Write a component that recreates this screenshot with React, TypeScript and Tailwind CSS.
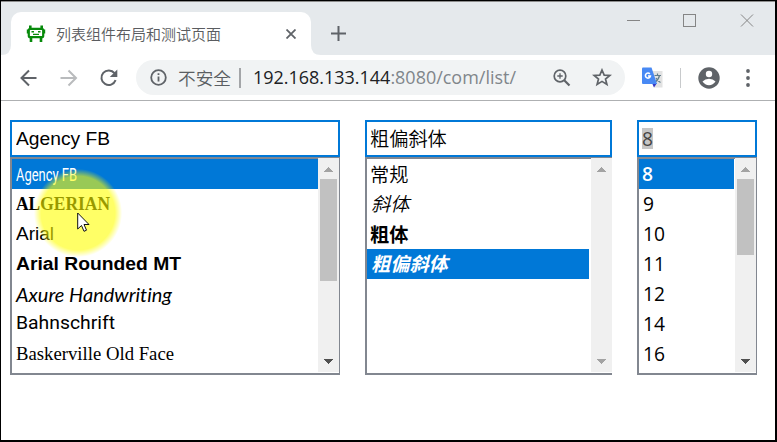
import React, { useLayoutEffect, useRef, useState } from 'react';

type FitProps = { width: number; className?: string; children: React.ReactNode };

// Text stretched horizontally so that its advance equals the given width.
function FitText({ width, className = '', children }: FitProps) {
  const ref = useRef<HTMLSpanElement>(null);
  const [scale, setScale] = useState(1);
  useLayoutEffect(() => {
    const natural = ref.current?.getBoundingClientRect().width;
    if (natural) setScale(width / natural);
  }, [width]);
  return (
    <span ref={ref} className={`inline-block origin-left whitespace-pre ${className}`} style={{ transform: `scaleX(${scale})` }}>
      {children}
    </span>
  );
}

function Arrow({ up = false, dim = false }: { up?: boolean; dim?: boolean }) {
  return (
    <svg width="9" height="5" viewBox="0 0 9 5" shapeRendering="crispEdges" className={dim ? 'fill-[#a3a3a3]' : 'fill-[#505050]'}>
      <path d={up ? 'M0 5L4.5 0L9 5Z' : 'M0 0H9L4.5 5Z'} />
    </svg>
  );
}

type ScrollProps = { thumb?: string; disabled?: boolean };

function Scrollbar({ thumb, disabled = false }: ScrollProps) {
  return (
    <div className="-mt-px flex h-[214px] w-[21px] shrink-0 flex-col items-center bg-[#f0f0f0]">
      <div className="flex h-[21px] shrink-0 items-center pt-[2px]"><Arrow up dim /></div>
      <div className="min-h-0 flex-1">{thumb && <div className={`w-[17px] bg-[#c1c1c1] ${thumb}`} />}</div>
      <div className="flex h-[21px] shrink-0 items-center"><Arrow dim={disabled} /></div>
    </div>
  );
}

type Item = { text: string; width: number; font: string };

type ListProps = {
  size: string;
  value: React.ReactNode;
  items: Item[];
  selected: number;
  rows: string;
  scroll: React.ReactNode;
  border?: string;
};

function ListField({ size, value, items, selected, rows, scroll, border = 'border-r' }: ListProps) {
  return (
    <div className={`flex shrink-0 flex-col ${size}`}>
      <div className="flex h-[37px] items-center border-2 border-[#0078d7] bg-white pl-1">{value}</div>
      <div className={`flex h-[218px] justify-between border-y-2 border-l-2 border-[#828790] bg-white ${border}`}>
        <ul className={rows}>
          {items.map((item, i) => (
            <li key={item.text} className={`flex h-[30px] items-center pl-1 ${i === selected ? 'bg-[#0078d7] text-white' : ''}`}>
              <FitText width={item.width} className={item.font}>{item.text}</FitText>
            </li>
          ))}
        </ul>
        {scroll}
      </div>
    </div>
  );
}

const sans = "font-['Liberation_Sans',sans-serif]";
const cjk = "font-['Noto_Sans_CJK_SC',sans-serif]";
const ui = "font-['Open_Sans','Noto_Sans',sans-serif]";

const fonts: Item[] = [
  { text: 'Agency FB', width: 61, font: "font-['Roboto',sans-serif] text-[19px]" },
  { text: 'ALGERIAN', width: 94, font: "font-['Liberation_Serif',serif] font-bold text-[19px] relative -top-px" },
  { text: 'Arial', width: 38, font: sans },
  { text: 'Arial Rounded MT', width: 165, font: `${sans} font-bold` },
  { text: 'Axure Handwriting', width: 156, font: "font-['Lato',cursive] text-[19px] italic [font-variant-ligatures:none]" },
  { text: 'Bahnschrift', width: 99, font: "font-['Roboto',sans-serif] relative -top-px" },
  { text: 'Baskerville Old Face', width: 158, font: "font-['Liberation_Serif',serif]" },
];

const styles: Item[] = [
  { text: '常规', width: 38.4, font: `${cjk} font-[350] -ml-px relative top-px` },
  { text: '斜体', width: 38.4, font: `${cjk} font-[350] italic` },
  { text: '粗体', width: 38.4, font: `${cjk} font-bold -ml-px relative top-px` },
  { text: '粗偏斜体', width: 76.8, font: `${cjk} font-bold italic` },
];

const sizes: Item[] = ['8', '9', '10', '11', '12', '14', '16'].map((text, i) => ({
  text,
  width: text.length * 11,
  font: i === 0 ? `${ui} font-semibold -ml-px` : ui,
}));

function Robot() {
  return (
    <svg width="20" height="18" viewBox="0 0 20 18" fill="none" stroke="#078a0b">
      <path d="M4.3 .5V4M15.7 .5V4M5 12V17M15 12V17" strokeWidth="2.6" />
      <path d="M1.6 4.5V8.5M18.4 4.5V8.5" strokeWidth="1.6" />
      <rect x="2.8" y="3.8" width="14.4" height="8.4" rx="1.5" strokeWidth="2.2" />
      <path d="M5.5 6.8H8M12 6.8H14.5M7 9.4H13" strokeWidth="1.4" />
    </svg>
  );
}

function Translate() {
  return (
    <svg width="21" height="21" viewBox="0 0 21 21">
      <path d="M7 4H20.5V20.5H12Z" fill="#e2e2e2" />
      <path d="M12.5 8.5H19M15.5 6.5V8.5M17.5 8.5Q16.5 13 13 15M14 11Q15.5 14 18.5 15.5" fill="none" stroke="#607d8b" strokeWidth="1.2" />
      <path d="M10 16H15L12 20.5Z" fill="#3538c4" />
      <path d="M0 1.5Q0 .5 1 .5H9.5L15 17H1Q0 17 0 16Z" fill="#4889f4" />
      <path d="M7.8 6.9A2.5 2.5 0 1 0 8.4 9H6" fill="none" stroke="#fff" strokeWidth="1.6" />
    </svg>
  );
}

export default function App() {
  return (
    <div className={`relative flex h-[442px] w-[777px] flex-col overflow-hidden border-t border-r-2 border-b-2 border-l border-black bg-white text-[19.2px] leading-none text-black ${sans}`}>
      <header className="flex h-[54px] shrink-0 justify-between border-t border-[#8d8d8d] bg-[#e5e9ec]">
        <div className="flex items-end">
          <svg width="10" height="10" viewBox="0 0 10 10"><path d="M10 0V10H0Q10 10 10 0Z" fill="#fff" /></svg>
          <div className="flex h-[43px] w-[300px] items-center rounded-t-[10px] bg-white pr-[15px] pl-[15px]">
            <Robot />
            <FitText width={165} className={`${cjk} ml-[10px] text-[15px] font-[350] text-[#5a5c60]`}>列表组件布局和测试页面</FitText>
            <svg className="ml-auto" width="10" height="10" viewBox="0 0 10 10" stroke="#5f6368" strokeWidth="1.8"><path d="M.5 .5L9.5 9.5M9.5 .5L.5 9.5" /></svg>
          </div>
          <svg width="10" height="10" viewBox="0 0 10 10"><path d="M0 0V10H10Q0 10 0 0Z" fill="#fff" /></svg>
          <svg className="mb-[14px] ml-[10px]" width="15" height="15" viewBox="0 0 15 15" stroke="#5f6368" strokeWidth="2"><path d="M0 7.5H15M7.5 0V15" /></svg>
        </div>
        <div className="flex pt-[12px] pr-[21px]">
          <svg width="128" height="13" viewBox="0 0 128 13" fill="none" stroke="#858585" strokeWidth="1">
            <path d="M1 6.5H14" /><rect x="57.5" y=".5" width="12" height="12" /><path d="M115 .5L127 12.5M127 .5L115 12.5" />
          </svg>
        </div>
      </header>

      <nav className="flex h-[46px] shrink-0 items-center border-b border-[#aeb0b2] bg-white pl-[18px]">
        <svg width="100" height="20" viewBox="0 0 100 20" fill="none" strokeWidth="2">
          <path d="M17.5 10H3M10 2.5L2.5 10L10 17.5" stroke="#5f6368" />
          <path d="M41.5 10H56M49.5 2.5L57 10L49.5 17.5" stroke="#b9bbbd" />
          <path d="M95.5 5.2A7.3 7.3 0 1 0 96.6 12.2" stroke="#5f6368" />
          <path d="M98.3 1.5V9H90.8Z" fill="#5f6368" />
        </svg>
        <div className="ml-[17px] flex h-[35px] w-[489px] items-center rounded-full bg-[#f1f3f4] pl-[14px]">
          <svg width="17" height="17" viewBox="0 0 17 17" fill="none" stroke="#5f6368" strokeWidth="1.8"><circle cx="8.5" cy="8.5" r="7.3" /><path d="M8.5 7.5V12.5M8.5 4.2V6" /></svg>
          <FitText width={53} className={`${cjk} ml-[11px] text-[17.6px] font-[350] text-[#5a5e62]`}>不安全</FitText>
          <div className="ml-[8px] h-[20px] w-[2px] bg-[#a3a5a8]" />
          <div className="ml-[12px] w-[264px]">
            <FitText width={263} className={`${ui} text-[19px] text-[#202124]`}>192.168.133.144<span className="text-[#80868b]">:8080/com/list/</span></FitText>
          </div>
          <svg className="ml-[36px]" width="18" height="18" viewBox="0 0 18 18" fill="none" stroke="#5f6368" strokeWidth="1.7"><circle cx="7" cy="7" r="5.8" /><path d="M4.3 7H9.7M7 4.3V9.7" strokeWidth="1.3" /><path d="M11.2 11.2L16.5 16.5" strokeWidth="2.2" /></svg>
          <svg className="ml-[21px]" width="20" height="19" viewBox="0 0 20 19" fill="none" stroke="#5f6368" strokeWidth="1.7"><path d="M10 2L12.2 7.1L17.8 7.5L13.5 11L14.9 16.4L10 13.4L5.1 16.4L6.5 11L2.2 7.5L7.8 7.1Z" /></svg>
        </div>
        <div className="ml-[17px]"><Translate /></div>
        <div className="ml-[17px] h-[20px] w-px bg-[#c8cacc]" />
        <svg className="ml-[17px]" width="22" height="22" viewBox="0 0 22 22"><circle cx="11" cy="11" r="10.7" fill="#5f6368" /><circle cx="11" cy="7" r="3.2" fill="#fff" /><path d="M4.5 14.6Q7 11.8 11 11.8T17.5 14.6Q15 18.3 11 18.3T4.5 14.6Z" fill="#fff" /></svg>
        <svg className="ml-[25px]" width="6" height="18" viewBox="0 0 6 18" fill="#5f6368"><circle cx="3" cy="2" r="1.9" /><circle cx="3" cy="9" r="1.9" /><circle cx="3" cy="16" r="1.9" /></svg>
      </nav>

      <main className="flex gap-[25px] pt-[19px] pl-[9px]">
        <ListField
          size="w-[330px]"
          value={<FitText width={94}>Agency FB</FitText>}
          items={fonts}
          selected={0}
          rows="w-[306px]"
          scroll={<Scrollbar thumb="h-[102px]" />}
        />
        <ListField
          size="w-[247px]"
          value={<FitText width={76.8} className={`${cjk} -ml-px font-[350]`}>粗偏斜体</FitText>}
          items={styles}
          selected={3}
          rows="w-[222px]"
          border=""
          scroll={<Scrollbar disabled />}
        />
        <ListField
          size="w-[120px]"
          value={<FitText width={11} className={`${ui} -ml-px bg-[#c6c6c6] py-px text-[#444]`}>8</FitText>}
          items={sizes}
          selected={0}
          rows="w-[95px]"
          scroll={<Scrollbar thumb="h-[76px]" />}
        />
      </main>

      <div className="absolute top-[167px] left-[32px] h-[90px] w-[90px] rounded-full bg-[radial-gradient(circle_closest-side,rgba(255,255,0,0.6)_82%,rgba(255,255,0,0)_98%)]" />
      <svg className="absolute top-[211px] left-[76px]" width="13" height="21" viewBox="0 0 13 21"><path d="M.7 1V17L4.5 13.5L7 19.3L9.5 18.2L7 12.5H12Z" fill="#fff" stroke="#111" strokeWidth="1" /></svg>
    </div>
  );
}
